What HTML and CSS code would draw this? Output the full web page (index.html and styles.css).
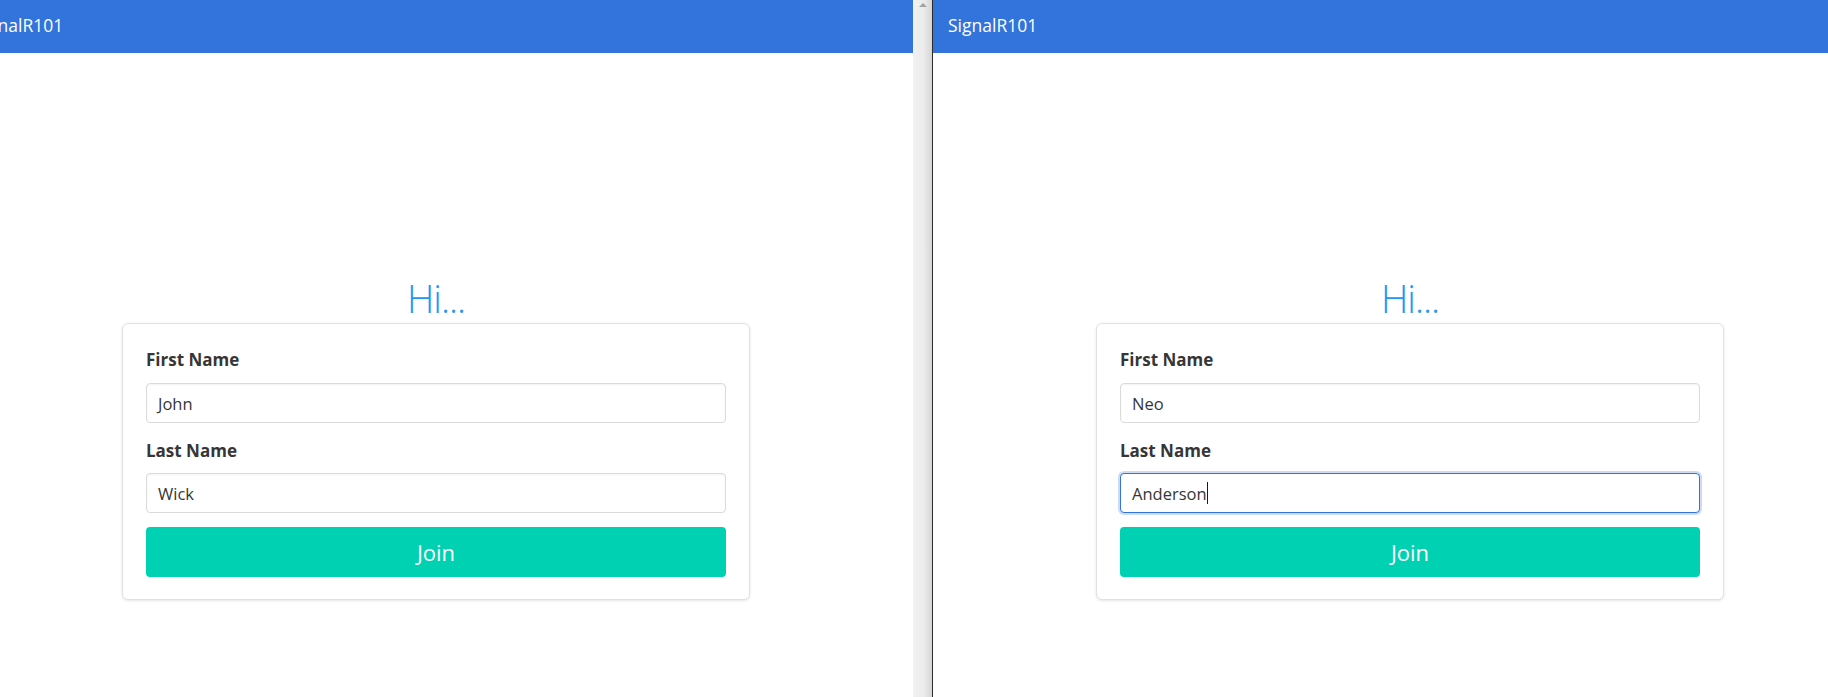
FILE: index.html
```html
<!DOCTYPE html>
<html lang="en">
<head>
<meta charset="utf-8">
<title>SignalR101</title>
<link rel="stylesheet" href="styles.css">
</head>
<body>
<div class="screen">
  <div class="pane pane-left">
    <div class="window window-left">
      <nav class="navbar"><span class="brand">SignalR101</span></nav>
      <main class="main">
        <h1 class="title">Hi...</h1>
        <div class="box">
          <div class="field">
            <label class="label">First Name</label>
            <div class="input"><span class="value">John</span></div>
          </div>
          <div class="field">
            <label class="label">Last Name</label>
            <div class="input"><span class="value">Wick</span></div>
          </div>
          <button class="button">Join</button>
        </div>
      </main>
    </div>
  </div>
  <div class="scrollbar"><span class="arrow-up"></span></div>
  <div class="divider"></div>
  <div class="pane pane-right">
    <div class="window">
      <nav class="navbar"><span class="brand">SignalR101</span></nav>
      <main class="main">
        <h1 class="title">Hi...</h1>
        <div class="box">
          <div class="field">
            <label class="label">First Name</label>
            <div class="input"><span class="value">Neo</span></div>
          </div>
          <div class="field">
            <label class="label">Last Name</label>
            <div class="input is-focused"><span class="value">Anderson</span><span class="caret"></span></div>
          </div>
          <button class="button">Join</button>
        </div>
      </main>
    </div>
  </div>
</div>
</body>
</html>
```

FILE: styles.css
```css
html, body {
  margin: 0;
  padding: 0;
  background: #ffffff;
}

body {
  font-family: "Open Sans", "Noto Sans", sans-serif;
  color: #363636;
}

.screen {
  display: flex;
  width: 1828px;
  height: 697px;
  overflow: hidden;
}

.pane {
  height: 697px;
  overflow: hidden;
  flex: none;
}

.pane-left {
  width: 913px;
}

.pane-right {
  flex: 1 1 auto;
  min-width: 0;
}

.window {
  width: 954px;
  flex: none;
}

.window-left {
  margin-left: -41px;
}

.navbar {
  height: 53px;
  background: #3273dc;
  display: flex;
  align-items: center;
  padding-left: 15px;
  box-sizing: border-box;
}

.brand {
  color: #ffffff;
  font-size: 17.5px;
  line-height: 1;
  padding-bottom: 2px;
}

.main {
  padding-top: 224px;
  display: flex;
  flex-direction: column;
  align-items: center;
}

.title {
  margin: 0 0 4px 0;
  font-size: 38px;
  line-height: 42px;
  font-weight: 300;
  color: #2196f3;
  letter-spacing: -1px;
}

.box {
  width: 628px;
  box-sizing: border-box;
  border: 1px solid #e1e1e1;
  border-radius: 6px;
  box-shadow: 0 1px 3px rgba(10, 10, 10, 0.10);
  padding: 23px 23px 22px 23px;
  background: #ffffff;
  display: flex;
  flex-direction: column;
}

.field {
  display: flex;
  flex-direction: column;
  margin-bottom: 15px;
}

.field + .field {
  margin-bottom: 14px;
}

.label {
  font-size: 17px;
  line-height: 25px;
  font-weight: 700;
  color: #363636;
  margin-bottom: 11px;
}

.field + .field .label {
  margin-bottom: 10px;
}

.input {
  height: 40px;
  box-sizing: border-box;
  border: 1px solid #dbdbdb;
  border-radius: 4px;
  box-shadow: inset 0 1px 2px rgba(10, 10, 10, 0.05);
  padding-left: 11px;
  display: flex;
  align-items: center;
  font-size: 16.5px;
  color: #363636;
  background: #ffffff;
}

.input.is-focused {
  border-color: #3273dc;
  box-shadow: 0 0 0 2px rgba(50, 115, 220, 0.25);
}

.caret {
  display: inline-block;
  width: 1px;
  height: 22px;
  background: #1a1a1a;
  margin-left: 0;
}

.button {
  height: 50px;
  border: none;
  border-radius: 4px;
  background: #00d1b2;
  color: #ffffff;
  font-family: "Open Sans", "Noto Sans", sans-serif;
  font-size: 22px;
  padding: 0;
  margin: 0;
  cursor: pointer;
}

.scrollbar {
  width: 19px;
  height: 697px;
  flex: none;
  background: linear-gradient(to right, #f1f1f1 0%, #ececec 55%, #d6d6d6 100%);
  display: flex;
  justify-content: center;
  padding-top: 3px;
  box-sizing: border-box;
}

.arrow-up {
  width: 0;
  height: 0;
  border-left: 4.5px solid transparent;
  border-right: 4.5px solid transparent;
  border-bottom: 4px solid #a3a3a3;
}

.divider {
  width: 1px;
  height: 697px;
  flex: none;
  background: #2a2a2a;
}
```
